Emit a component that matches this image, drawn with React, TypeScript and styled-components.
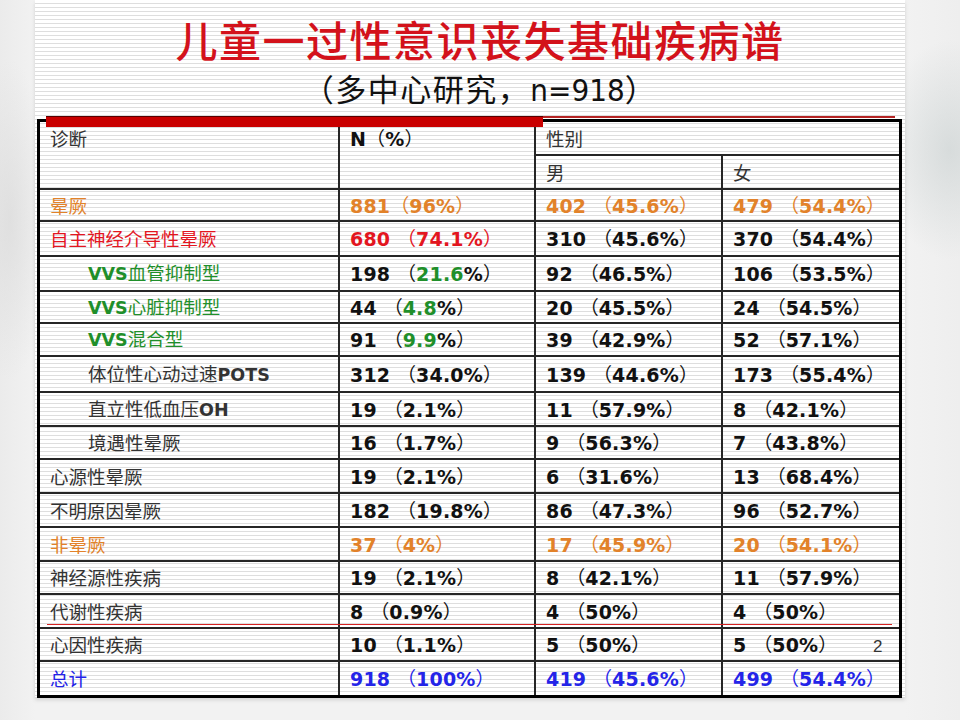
import React from 'react';
import styled, { createGlobalStyle, css } from 'styled-components';

const COLORS = {
  orange: '#e2822a',
  red: '#e3161f',
  green: '#1f8f2a',
  blue: '#2424e8',
  black: '#111111',
  label: '#333333',
  line: '#262626',
};

const GlobalStyle = createGlobalStyle`
  html, body { margin: 0; padding: 0; }
  body {
    width: 960px;
    height: 720px;
    overflow: hidden;
    background: #f0f0f0;
  }
`;

const Page = styled.div`
  width: 960px;
  height: 720px;
  box-sizing: border-box;
  padding-left: 35px;
  background:
    radial-gradient(ellipse 70px 110px at 950px 150px, rgba(196, 204, 204, 0.55), rgba(196, 204, 204, 0) 100%),
    radial-gradient(ellipse 40px 160px at 10px 220px, rgba(210, 210, 210, 0.5), rgba(210, 210, 210, 0) 100%),
    linear-gradient(90deg, #ebebeb 0, #f2f2f2 35px, #f2f2f2 905px, #eeeeee 960px);
`;

const Slide = styled.div`
  position: relative;
  width: 870px;
  height: 697px;
  display: flex;
  flex-direction: column;
  align-items: flex-start;
  background: repeating-linear-gradient(180deg, #ffffff 0px, #ffffff 2.6px, #dedede 2.6px, #dedede 4px);
  box-shadow: 0 3px 4px rgba(0, 0, 0, 0.13);
`;

const Title = styled.h1`
  align-self: stretch;
  margin: 18px 0 0;
  padding-left: 20px;
  text-align: center;
  font-family: "Noto Sans CJK SC", sans-serif;
  font-weight: 500;
  font-size: 42px;
  line-height: 42px;
  letter-spacing: 1.5px;
  color: #d3121b;
`;

const Subtitle = styled.h2`
  align-self: stretch;
  margin: 12px 0 0;
  padding-left: 20px;
  text-align: center;
  font-family: "Noto Sans CJK SC", sans-serif;
  font-weight: 400;
  font-size: 31px;
  line-height: 31px;
  letter-spacing: 1.5px;
  color: #111111;
`;

const Narrow = styled.span`
  font-family: "Liberation Sans Narrow", "DejaVu Sans Condensed", "Liberation Sans", sans-serif;
  letter-spacing: 0;
`;

const TableWrap = styled.div`
  position: relative;
  box-sizing: border-box;
  width: 865px;
  margin: 13px 0 0 2px;
  border: 3px solid #000000;

  &::before {
    content: '';
    position: absolute;
    left: 6px;
    top: -6px;
    width: 497px;
    height: 10px;
    border-top: 1px solid #5a0000;
    background: #c90000;
  }

  &::after {
    content: '';
    position: absolute;
    left: 503px;
    top: -6px;
    width: 352px;
    height: 2px;
    background: #b52424;
  }
`;

const HeaderRow = styled.div`
  display: grid;
  grid-template-columns: 300px 196px 363px;
  height: 68px;
`;

const GenderBlock = styled.div`
  display: grid;
  grid-template-columns: 187px 176px;
  grid-template-rows: 34px 34px;
`;

const Row = styled.div<{ $h: number; $end?: boolean; $underline?: boolean }>`
  position: relative;
  display: grid;
  grid-template-columns: 300px 196px 187px 176px;
  height: ${(p) => p.$h}px;

  ${(p) =>
    p.$end &&
    css`
      & > div {
        border-bottom: none;
      }
    `}

  ${(p) =>
    p.$underline &&
    css`
      &::after {
        content: '';
        position: absolute;
        left: 7px;
        right: 7px;
        bottom: 4px;
        height: 1.5px;
        background: #d62222;
      }
    `}
`;

const Cell = styled.div<{ $indent?: boolean; $last?: boolean; $top?: boolean; $span?: boolean }>`
  display: flex;
  align-items: ${(p) => (p.$top ? 'flex-start' : 'center')};
  box-sizing: border-box;
  min-width: 0;
  padding-left: ${(p) => (p.$indent ? 48 : 10)}px;
  border-bottom: 2px solid ${COLORS.line};
  border-right: ${(p) => (p.$last ? 'none' : `2px solid ${COLORS.line}`)};
  white-space: nowrap;
  ${(p) => p.$span && 'grid-column: 1 / span 2;'}
`;

const HeadLine = styled.div`
  height: 32px;
  display: flex;
  align-items: center;
`;

const LabelText = styled.span<{ $c: string }>`
  font-family: "Noto Sans CJK SC", sans-serif;
  font-weight: 400;
  font-size: 18.5px;
  line-height: 1;
  color: ${(p) => p.$c};
`;

const Latin = styled.span`
  font-family: "DejaVu Sans", "Noto Sans CJK SC", sans-serif;
  font-weight: 700;
  font-size: 17.5px;
  color: inherit;
`;

const Num = styled.span<{ $c: string }>`
  font-family: "DejaVu Sans", "Noto Sans CJK SC", sans-serif;
  font-weight: 700;
  font-size: 19px;
  line-height: 1;
  letter-spacing: 0.2px;
  color: ${(p) => p.$c};
`;

const Paren = styled.span`
  font-family: "Noto Sans CJK SC", sans-serif;
  font-weight: 400;
  letter-spacing: 0;
`;

const Hi = styled.span`
  color: ${COLORS.green};
`;

const PageNo = styled.span`
  position: absolute;
  left: 838px;
  top: 638px;
  font-family: "Liberation Sans", sans-serif;
  font-size: 17px;
  line-height: 17px;
  color: #333333;
`;

function Label({ text, color }: { text: string; color: string }) {
  const parts = text.split(/([A-Za-z]+)/).filter(Boolean);
  return (
    <LabelText $c={color}>
      {parts.map((p, i) => (/^[A-Za-z]+$/.test(p) ? <Latin key={i}>{p}</Latin> : <React.Fragment key={i}>{p}</React.Fragment>))}
    </LabelText>
  );
}

function NumText({ text, color, hi }: { text: string; color: string; hi?: string }) {
  const parts = text.split(/(（|）)/).filter(Boolean);
  return (
    <Num $c={color}>
      {parts.map((p, i) => {
        if (p === '（' || p === '）') return <Paren key={i}>{p}</Paren>;
        if (hi && p.includes(hi)) {
          const idx = p.indexOf(hi);
          return (
            <React.Fragment key={i}>
              {p.slice(0, idx)}
              <Hi>{hi}</Hi>
              {p.slice(idx + hi.length)}
            </React.Fragment>
          );
        }
        return <React.Fragment key={i}>{p}</React.Fragment>;
      })}
    </Num>
  );
}

type RowData = {
  label: string;
  lc?: string;
  indent?: boolean;
  n: string;
  nc?: string;
  hi?: string;
  m: string;
  f: string;
  mc?: string;
  h: number;
  underline?: boolean;
};

const O = COLORS.orange;
const R = COLORS.red;
const G = COLORS.green;
const B = COLORS.blue;

const rows: RowData[] = [
  { label: '晕厥', lc: O, n: '881（96%）', nc: O, m: '402 （45.6%）', f: '479 （54.4%）', mc: O, h: 32 },
  { label: '自主神经介导性晕厥', lc: R, n: '680 （74.1%）', nc: R, m: '310 （45.6%）', f: '370 （54.4%）', h: 35 },
  { label: 'VVS血管抑制型', lc: G, indent: true, n: '198 （21.6%）', hi: '21.6', m: '92 （46.5%）', f: '106 （53.5%）', h: 35 },
  { label: 'VVS心脏抑制型', lc: G, indent: true, n: '44 （4.8%）', hi: '4.8', m: '20 （45.5%）', f: '24 （54.5%）', h: 32 },
  { label: 'VVS混合型', lc: G, indent: true, n: '91 （9.9%）', hi: '9.9', m: '39 （42.9%）', f: '52 （57.1%）', h: 33 },
  { label: '体位性心动过速POTS', indent: true, n: '312 （34.0%）', m: '139 （44.6%）', f: '173 （55.4%）', h: 36 },
  { label: '直立性低血压OH', indent: true, n: '19 （2.1%）', m: '11 （57.9%）', f: '8 （42.1%）', h: 34 },
  { label: '境遇性晕厥', indent: true, n: '16 （1.7%）', m: '9 （56.3%）', f: '7 （43.8%）', h: 33 },
  { label: '心源性晕厥', n: '19 （2.1%）', m: '6 （31.6%）', f: '13 （68.4%）', h: 34 },
  { label: '不明原因晕厥', n: '182 （19.8%）', m: '86 （47.3%）', f: '96 （52.7%）', h: 34 },
  { label: '非晕厥', lc: O, n: '37 （4%）', nc: O, m: '17 （45.9%）', f: '20 （54.1%）', mc: O, h: 34 },
  { label: '神经源性疾病', n: '19 （2.1%）', m: '8 （42.1%）', f: '11 （57.9%）', h: 33 },
  { label: '代谢性疾病', n: '8 （0.9%）', m: '4 （50%）', f: '4 （50%）', h: 34, underline: true },
  { label: '心因性疾病', n: '10 （1.1%）', m: '5 （50%）', f: '5 （50%）', h: 33 },
  { label: '总计', lc: B, n: '918 （100%）', nc: B, m: '419 （45.6%）', f: '499 （54.4%）', mc: B, h: 33 },
];

export default function App() {
  return (
    <>
      <GlobalStyle />
      <Page>
        <Slide>
          <Title>儿童一过性意识丧失基础疾病谱</Title>
          <Subtitle>
            （多中心研究，<Narrow>n=918</Narrow>）
          </Subtitle>
          <TableWrap>
            <HeaderRow>
              <Cell $top>
                <HeadLine>
                  <Label text="诊断" color={COLORS.label} />
                </HeadLine>
              </Cell>
              <Cell $top>
                <HeadLine>
                  <NumText text="N（%）" color={COLORS.black} />
                </HeadLine>
              </Cell>
              <GenderBlock>
                <Cell $span $last>
                  <Label text="性别" color={COLORS.label} />
                </Cell>
                <Cell>
                  <Label text="男" color={COLORS.label} />
                </Cell>
                <Cell $last>
                  <Label text="女" color={COLORS.label} />
                </Cell>
              </GenderBlock>
            </HeaderRow>
            {rows.map((r, i) => (
              <Row key={r.label} $h={r.h} $end={i === rows.length - 1} $underline={r.underline}>
                <Cell $indent={r.indent}>
                  <Label text={r.label} color={r.lc ?? COLORS.label} />
                </Cell>
                <Cell>
                  <NumText text={r.n} color={r.nc ?? COLORS.black} hi={r.hi} />
                </Cell>
                <Cell>
                  <NumText text={r.m} color={r.mc ?? COLORS.black} />
                </Cell>
                <Cell $last>
                  <NumText text={r.f} color={r.mc ?? COLORS.black} />
                </Cell>
              </Row>
            ))}
          </TableWrap>
          <PageNo>2</PageNo>
        </Slide>
      </Page>
    </>
  );
}
